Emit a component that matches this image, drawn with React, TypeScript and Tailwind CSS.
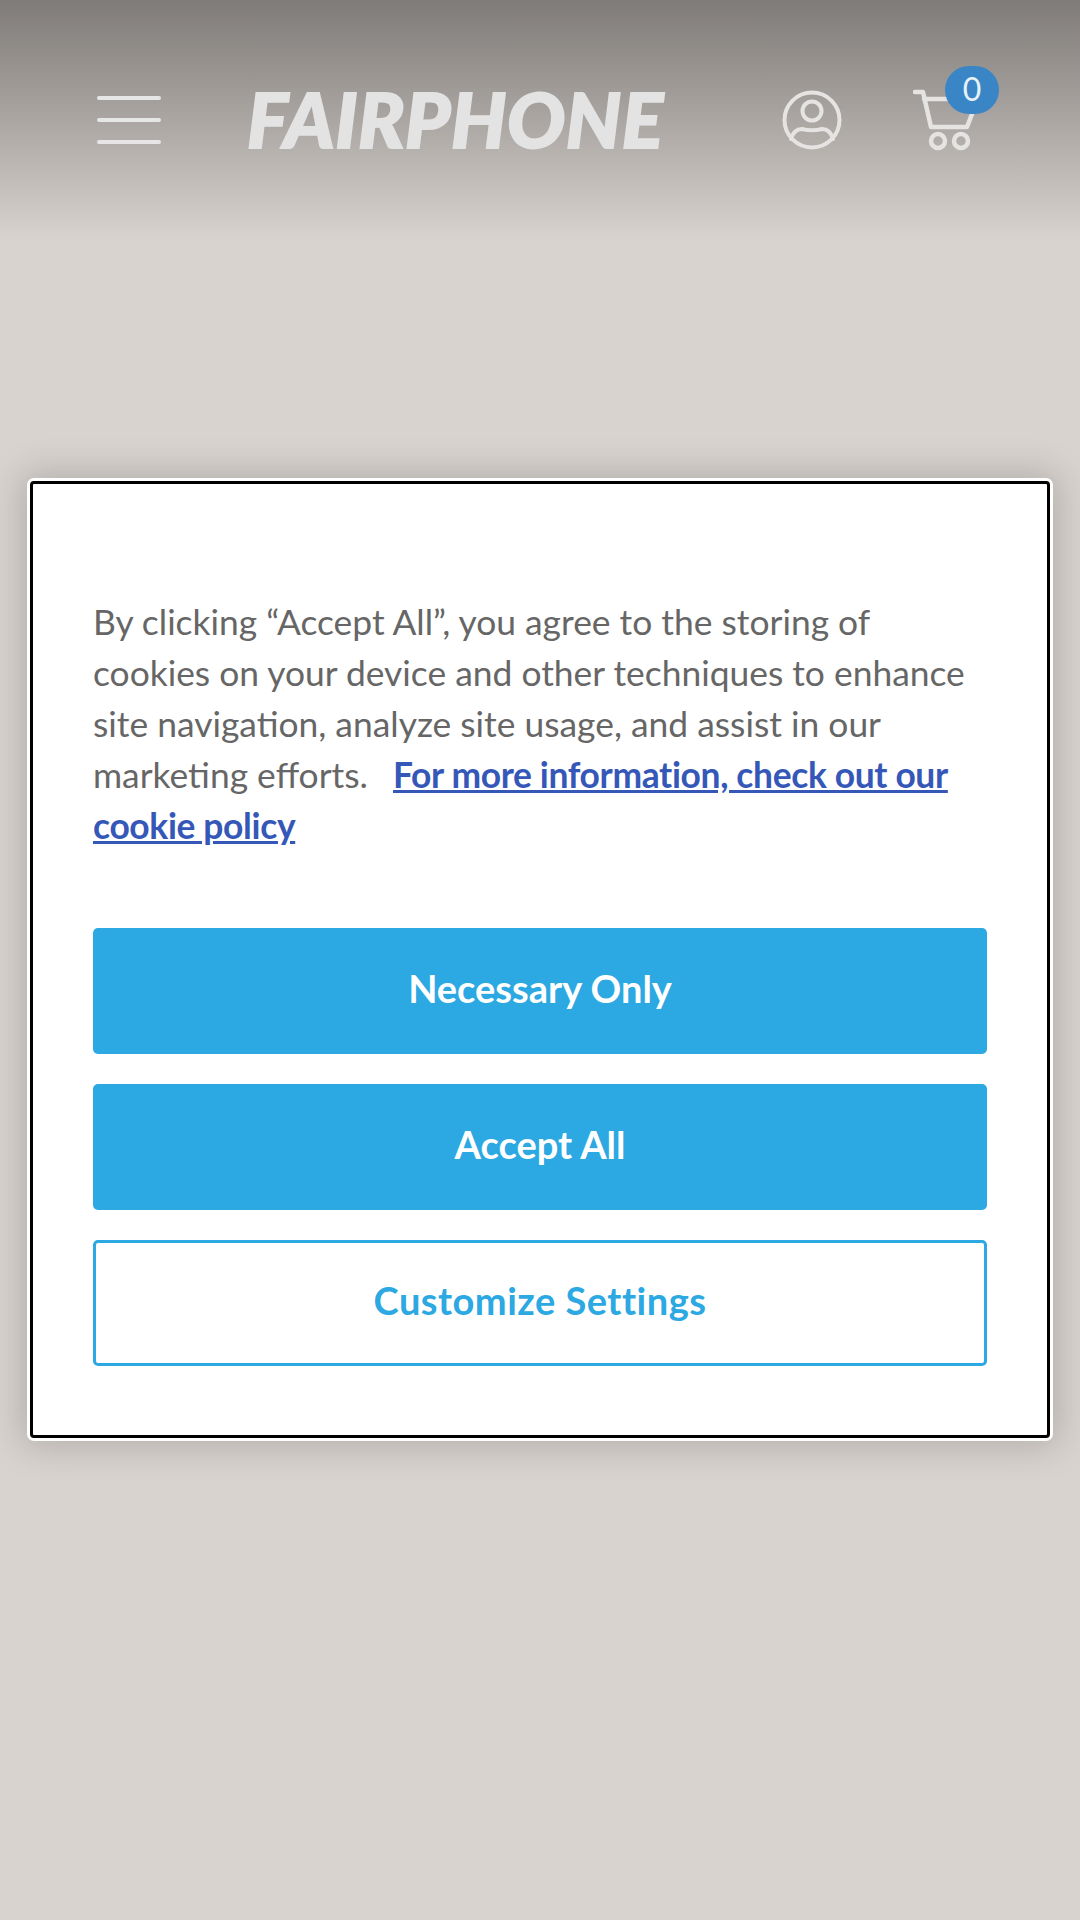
import React from 'react';

const HamburgerIcon = () => (
  <div className="flex flex-col gap-[18px] w-[64px] shrink-0">
    <div className="h-[4px] rounded-full bg-[#e6e6e6]" />
    <div className="h-[4px] rounded-full bg-[#e6e6e6]" />
    <div className="h-[4px] rounded-full bg-[#e6e6e6]" />
  </div>
);

const UserIcon = () => (
  <svg width="62" height="62" viewBox="0 0 62 62" fill="none" stroke="#e6e4e2" strokeWidth="4" className="shrink-0">
    <circle cx="31" cy="31" r="27.5" />
    <circle cx="31" cy="22" r="9.5" />
    <path d="M10 50c2-7 6-10 11-10 6 1.500 14 1.500 20 0 5 0 9 3 11 10" strokeLinecap="round" />
  </svg>
);

const CartIcon = () => (
  <div className="relative w-[80px] h-[62px] shrink-0">
    <svg width="70" height="62" viewBox="0 0 70 62" fill="none" stroke="#e6e4e2" strokeWidth="4.5" strokeLinecap="round" strokeLinejoin="round">
      <path d="M2 3h8l8 35h36l5-13" />
      <path d="M11 10h30" />
      <circle cx="25" cy="52" r="7" />
      <circle cx="48" cy="52" r="7" />
    </svg>
    <span className="absolute left-[32px] top-[-23px] w-[54px] h-[48px] rounded-full bg-[#3a85c5] text-[#e8f1f8] text-[32px] leading-[46px] text-center font-['Lato',sans-serif]">
      0
    </span>
  </div>
);

export default function App() {
  return (
    <div className="min-h-[1920px] bg-[#d8d3cf] font-['Lato',sans-serif] overflow-hidden">
      <header className="h-[240px] flex items-center pl-[97px] bg-gradient-to-b from-[#7f7b78] to-[#d8d3cf]">
        <HamburgerIcon />
        <div className="ml-[86px] w-[416px] shrink-0 pb-[4px] text-[#e3e3e3] text-[77px] leading-none font-black italic tracking-[0.5px] [-webkit-text-stroke:2px_#e3e3e3] whitespace-nowrap">
          FAIRPHONE
        </div>
        <div className="ml-[118px]">
          <UserIcon />
        </div>
        <div className="ml-[70px]">
          <CartIcon />
        </div>
      </header>

      <div className="mx-[30px] mt-[241px] h-[957px] bg-white border-[3px] border-black rounded-[4px] px-[60px] pt-[112px] shadow-[0_0_0_3px_#ffffff,0_0_36px_8px_rgba(0,0,0,0.18)]">
        <p className="text-[35.4px] leading-[51px] text-[#666666]">
          By clicking “Accept All”, you agree to the storing of cookies on your device and other techniques to enhance site navigation, analyze site usage, and assist in our marketing efforts.{' '}
          <a href="#" className="ml-[16px] font-bold text-[#3558b8] underline tracking-[-0.35px]">
            For more information, check out our cookie policy
          </a>
        </p>

        <div className="mt-[77px] flex flex-col gap-[30px]">
          <button className="h-[126px] rounded-[5px] bg-[#2ca8e2] text-white text-[38px] font-bold pb-[6px]">
            Necessary Only
          </button>
          <button className="h-[126px] rounded-[5px] bg-[#2ca8e2] text-white text-[38px] font-bold pb-[6px]">
            Accept All
          </button>
          <button className="h-[126px] rounded-[5px] border-[3px] border-[#2ca8e2] bg-white text-[#2ca8e2] text-[38px] font-bold tracking-[0.5px] pb-[6px]">
            Customize Settings
          </button>
        </div>
      </div>
    </div>
  );
}
